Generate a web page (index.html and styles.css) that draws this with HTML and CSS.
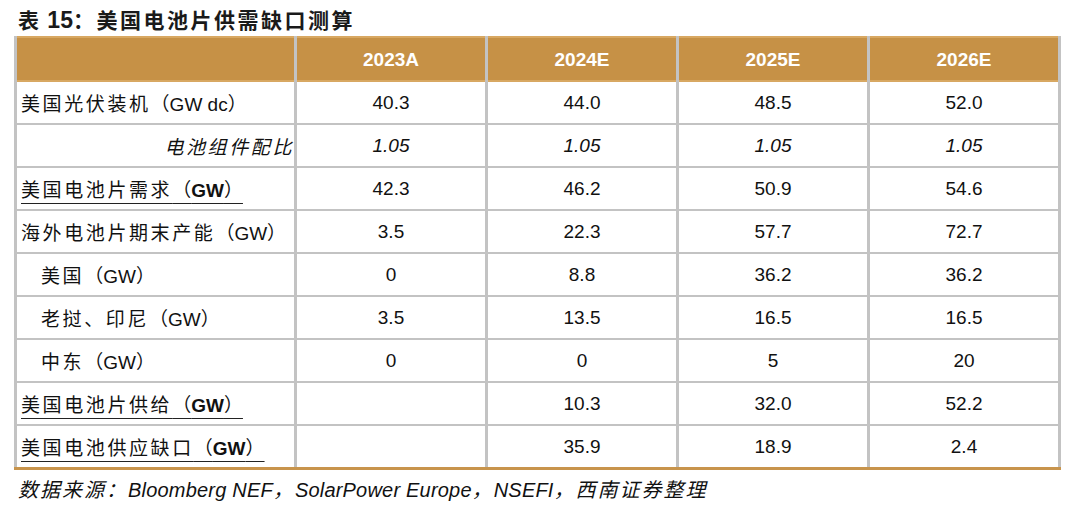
FILE: index.html
```html
<!DOCTYPE html>
<html lang="zh-CN">
<head>
<meta charset="utf-8">
<link rel="stylesheet" href="styles.css">
</head>
<body>
<div class="page">
  <h1 class="title"><span class="cj">表</span> <span class="num">15</span><span class="cj">：美国电池片供需缺口测算</span></h1>
  <table class="grid">
    <colgroup>
      <col class="c-label"><col class="c-val"><col class="c-val"><col class="c-val"><col class="c-val">
    </colgroup>
    <thead>
      <tr><th></th><th>2023A</th><th>2024E</th><th>2025E</th><th>2026E</th></tr>
    </thead>
    <tbody>
      <tr><td class="lbl"><span class="cj">美国光伏装机</span>（GW dc）</td><td>40.3</td><td>44.0</td><td>48.5</td><td>52.0</td></tr>
      <tr class="it"><td class="lbl right"><span class="cj">电池组件配比</span></td><td>1.05</td><td>1.05</td><td>1.05</td><td>1.05</td></tr>
      <tr><td class="lbl"><span class="ul"><span class="cj">美国电池片需求</span>（<b>GW</b>）</span></td><td>42.3</td><td>46.2</td><td>50.9</td><td>54.6</td></tr>
      <tr><td class="lbl"><span class="cj">海外电池片期末产能</span>（GW）</td><td>3.5</td><td>22.3</td><td>57.7</td><td>72.7</td></tr>
      <tr><td class="lbl ind"><span class="cj">美国</span>（GW）</td><td>0</td><td>8.8</td><td>36.2</td><td>36.2</td></tr>
      <tr><td class="lbl ind"><span class="cj">老挝、印尼</span>（GW）</td><td>3.5</td><td>13.5</td><td>16.5</td><td>16.5</td></tr>
      <tr><td class="lbl ind"><span class="cj">中东</span>（GW）</td><td>0</td><td>0</td><td>5</td><td>20</td></tr>
      <tr><td class="lbl"><span class="ul"><span class="cj">美国电池片供给</span>（<b>GW</b>）</span></td><td></td><td>10.3</td><td>32.0</td><td>52.2</td></tr>
      <tr class="last"><td class="lbl"><span class="ul"><span class="cj">美国电池供应缺口</span>（<b>GW</b>）</span></td><td></td><td>35.9</td><td>18.9</td><td>2.4</td></tr>
    </tbody>
  </table>
  <p class="source"><span class="cj">数据来源：</span>Bloomberg NEF<span class="cj">，</span>SolarPower Europe<span class="cj">，</span>NSEFI<span class="cj">，西南证券整理</span></p>
</div>
</body>
</html>
```

FILE: styles.css
```css
html, body {
  margin: 0;
  padding: 0;
  background: #ffffff;
}

body {
  font-family: "Liberation Sans", Arial, "Noto Sans CJK SC", sans-serif;
  color: #111111;
}

.page {
  width: 1080px;
  height: 506px;
  padding: 4px 0 0 14px;
  box-sizing: border-box;
}

.title {
  margin: 0 0 0 4px;
  height: 32px;
  font-size: 21px;
  line-height: 31px;
  font-weight: 700;
  color: #1a1a1a;
}

.title .cj {
  font-family: "Noto Sans CJK SC", sans-serif;
  letter-spacing: 2.5px;
}

.title .num {
  font-family: "Liberation Sans", Arial, sans-serif;
  font-size: 23px;
}

.cj {
  font-family: "Noto Sans CJK SC", sans-serif;
  letter-spacing: 2.6px;
}

.grid {
  border-collapse: collapse;
  table-layout: fixed;
  width: 1046px;
  font-size: 19px;
}

.c-label { width: 280px; }
.c-val { width: 191px; }

.grid th,
.grid td {
  border-left: 3px solid #c3c3c3;
  border-right: 3px solid #c3c3c3;
  padding: 0;
  text-align: center;
  vertical-align: middle;
}

.grid thead th {
  background: #c69146;
  color: #ffffff;
  font-weight: 700;
  height: 41px;
  border-top: 2px solid #d8a862;
  border-bottom: 2px solid #d8a862;
  padding-top: 1px;
}

.grid tbody td {
  height: 41px;
  border-bottom: 2px solid #c3c3c3;
}

.grid tbody tr.last td {
  border-bottom: 3px solid #c8944c;
}

.grid td.lbl {
  text-align: left;
  padding-left: 4px;
}

.grid td.lbl.ind {
  padding-left: 24px;
}

.grid td.lbl.right {
  text-align: right;
  padding-right: 0;
}

.it td {
  font-style: italic;
}

.ul {
  text-decoration: underline;
  text-decoration-thickness: 1px;
  text-underline-offset: 6px;
  text-decoration-color: #222;
  margin-left: -2px;
  padding-left: 2px;
}

.ul b {
  font-weight: 700;
}

.source {
  margin: 6px 0 0 4px;
  font-size: 20px;
  font-style: italic;
  line-height: 26px;
  letter-spacing: 0.2px;
}

.source .cj {
  letter-spacing: 2px;
}
```
